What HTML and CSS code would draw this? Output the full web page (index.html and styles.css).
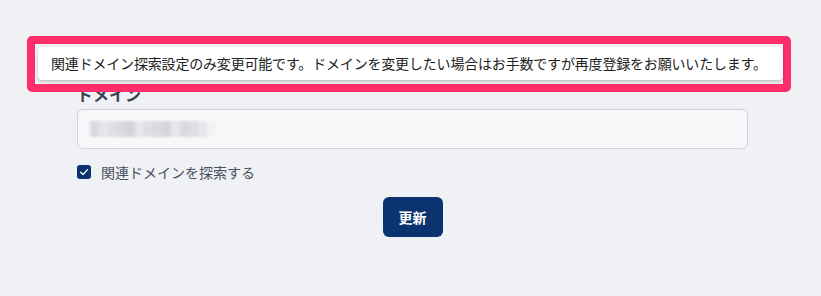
FILE: index.html
```html
<!DOCTYPE html>
<html lang="ja">
<head>
<meta charset="utf-8">
<link rel="stylesheet" href="styles.css">
</head>
<body>
<div class="page">
  <form class="form">
    <label class="field-label">ドメイン</label>
    <div class="input">
      <div class="mosaic">
        <span class="m a"></span><span class="m b"></span><span class="m c"></span><span class="m a"></span><span class="m d"></span><span class="m b"></span><span class="m c"></span><span class="m a"></span><span class="m d"></span><span class="m b"></span><span class="m a"></span><span class="m c"></span><span class="m b"></span><span class="m e"></span>
      </div>
    </div>
    <label class="check-row">
      <span class="checkbox">
        <svg viewBox="0 0 14 14" width="14" height="14"><path d="M3.6 7.2 L6 9.5 L10.6 4.6" fill="none" stroke="#fff" stroke-width="1.2" stroke-linecap="round" stroke-linejoin="round"/></svg>
      </span>
      <span class="check-text">関連ドメインを探索する</span>
    </label>
    <div class="actions">
      <button type="button" class="btn">更新</button>
    </div>
  </form>
  <div class="highlight">
    <div class="tooltip">関連ドメイン探索設定のみ変更可能です。ドメインを変更したい場合はお手数ですが再度登録をお願いいたします。</div>
  </div>
</div>
</body>
</html>
```

FILE: styles.css
```css
html, body {
  margin: 0;
  padding: 0;
  background: #f0f1f4;
  font-family: "Noto Sans CJK JP", "Noto Sans", sans-serif;
}
.page {
  position: relative;
  width: 821px;
  height: 296px;
  overflow: hidden;
}
.form {
  display: flex;
  flex-direction: column;
  margin-left: 77px;
  width: 671px;
  padding-top: 84px;
}
.field-label {
  font-size: 16px;
  font-weight: 700;
  color: #3a4150;
  line-height: 20px;
  height: 20px;
  margin-bottom: 5px;
}
.input {
  box-sizing: border-box;
  height: 40px;
  border: 1px solid #cfd2da;
  border-radius: 6px;
  background: #f7f8fa;
  display: flex;
  align-items: center;
  padding-left: 12px;
}
.mosaic {
  display: grid;
  grid-template-columns: repeat(14, 9px);
  grid-template-rows: 16px;
  filter: blur(1.5px);
  opacity: 0.85;
}
.m { display: block; }
.m.a { background: #d4d5da; }
.m.b { background: #e2e3e7; }
.m.c { background: #dadbe0; }
.m.d { background: #cfd0d5; }
.m.e { background: #f2f3f5; }
.check-row {
  display: flex;
  align-items: center;
  gap: 10px;
  margin-top: 15px;
  height: 16px;
}
.checkbox {
  width: 14px;
  height: 14px;
  border-radius: 3px;
  background: #0b3370;
  display: flex;
}
.check-text {
  font-size: 14px;
  color: #4b5060;
  line-height: 16px;
}
.actions {
  display: flex;
  justify-content: center;
  margin-top: 17px;
}
.btn {
  width: 60px;
  height: 40px;
  border: none;
  border-radius: 6px;
  background: #0b3370;
  color: #fff;
  font-family: "Noto Sans CJK JP", sans-serif;
  font-weight: 700;
  font-size: 14px;
  padding: 0;
}
.highlight {
  position: absolute;
  left: 27px;
  top: 36px;
  width: 764px;
  height: 56px;
  box-sizing: border-box;
  border: 8px solid #fe2e6b;
  border-radius: 5px;
  padding: 3px 0 0 3px;
}
.tooltip {
  box-sizing: border-box;
  height: 33px;
  background: #fff;
  border-radius: 4px;
  box-shadow: 0 2px 3px rgba(0,0,0,0.18), 0 0 1px rgba(0,0,0,0.15);
  font-size: 14px;
  letter-spacing: -0.18px;
  color: #222;
  line-height: 33px;
  padding-left: 13px;
  white-space: nowrap;
}
```
